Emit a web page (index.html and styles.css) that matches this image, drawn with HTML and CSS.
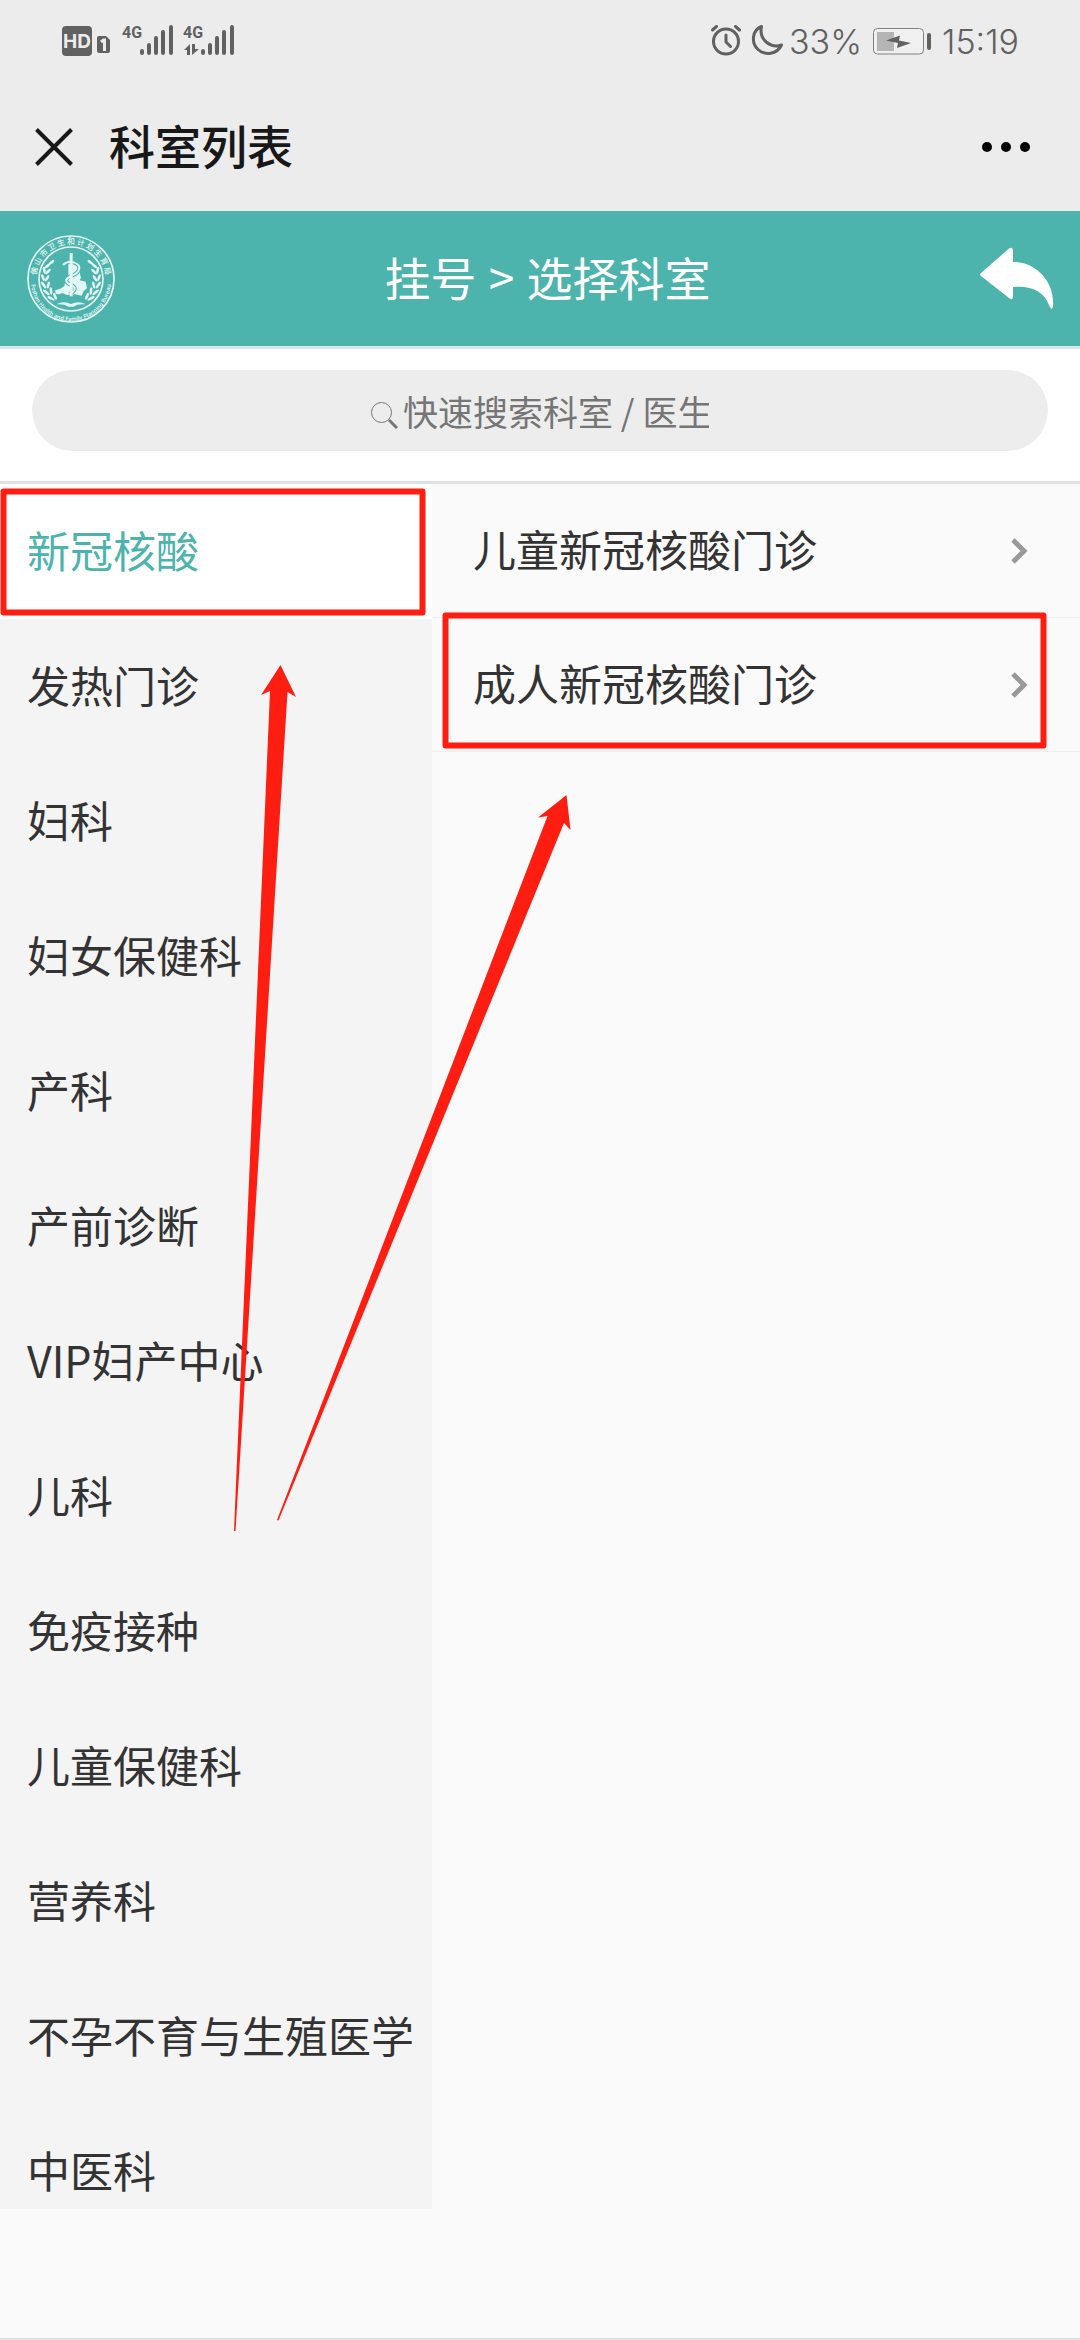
FILE: index.html
```html
<!DOCTYPE html>
<html lang="zh-CN">
<head>
<meta charset="utf-8">
<meta name="viewport" content="width=device-width, initial-scale=1">
<title>科室列表</title>
<link rel="stylesheet" href="styles.css">
</head>
<body>
<div class="app">
  <div class="status-bar">
    <svg class="status-signal" width="174" height="64" viewBox="61 9 174 64" aria-hidden="true">
      <rect class="fill" x="62" y="26" width="30" height="30" rx="4"/>
      <text class="hd-label" x="77" y="48" text-anchor="middle">HD</text>
      <path class="fill" d="M99 36h7l4 4v11q0 2-2 2h-9q-2 0-2-2V38q0-2 2-2z"/>
      <path class="sim-digit" d="M101 42l2.500-2h1v11"/>
      <text class="net-label" x="122" y="38">4G</text>
      <path class="bars" d="M142 51v2M149 45v8M156 38v15M163 32v21M171 27v26"/>
      <text class="net-label" x="183" y="38">4G</text>
      <path class="fill" d="M184 50l6-6v11h-3v-5zM192 44h3v5h4l-7 6z"/>
      <path class="bars" d="M203 51v2M210 45v8M217 38v15M224 32v21M232 27v26"/>
    </svg>
    <div class="status-info">
      <svg width="73" height="32" viewBox="710 25 73 32" aria-hidden="true">
        <g class="stroke">
          <circle cx="726" cy="41.500" r="12.500"/>
          <path d="M726 35v7l4.500 4.500M712.500 30l4-3.500M739.500 30l-4-3.500"/>
          <path class="moon" d="M761.500 26.500C752 30 751 43 758 49.500C765 56 777 54.500 781.500 45C772 48.500 758.500 41 761.500 26.500z"/>
        </g>
      </svg>
      <span class="battery-text">33%</span>
      <svg class="battery" width="60" height="28" viewBox="871 26 60 28" aria-hidden="true">
        <rect class="shell" x="872.500" y="27.500" width="50" height="25.500" rx="4"/>
        <rect class="level" x="876" y="31" width="17" height="19"/>
        <rect class="fill" x="926" y="32" width="4" height="17" rx="2"/>
        <path class="fill" d="M885 39.500l14-5-1 5 12 2.500-14 5 1-5z"/>
      </svg>
      <span>15:19</span>
    </div>
  </div>

  <div class="title-bar">
    <button class="icon-button" type="button" aria-label="关闭">
      <svg width="38" height="38" viewBox="0 0 38 38"><path class="close-mark" d="M1.500 1.500l35 35M36.500 1.500l-35 35"/></svg>
    </button>
    <h1 class="title">科室列表</h1>
    <button class="icon-button" type="button" aria-label="更多">
      <svg width="50" height="12" viewBox="0 0 50 12"><circle cx="6" cy="6" r="5"/><circle cx="25" cy="6" r="5"/><circle cx="44" cy="6" r="5"/></svg>
    </button>
  </div>

  <header class="banner">
    <svg class="logo" viewBox="0 0 264 264" role="img" aria-label="佛山市卫生和计划生育局">
      <defs>
        <path id="arc-top" d="M29 146A104 104 0 1 1 235 146"/>
        <path id="arc-bottom" d="M12 138A120 120 0 0 0 252 138"/>
        <g id="wreath">
          <ellipse cx="62" cy="92" rx="4" ry="11" transform="rotate(50 62 92)"/>
          <ellipse cx="74" cy="82" rx="4" ry="10" transform="rotate(50 74 82)"/>
          <ellipse cx="52" cy="106" rx="4" ry="11" transform="rotate(-10 52 106)"/>
          <ellipse cx="63" cy="110" rx="4" ry="11" transform="rotate(45 63 110)"/>
          <ellipse cx="48" cy="128" rx="4" ry="11" transform="rotate(-20 48 128)"/>
          <ellipse cx="60" cy="130" rx="4" ry="11" transform="rotate(32 60 130)"/>
          <ellipse cx="50" cy="150" rx="4" ry="12" transform="rotate(-35 50 150)"/>
          <ellipse cx="64" cy="150" rx="4" ry="11" transform="rotate(14 64 150)"/>
          <ellipse cx="58" cy="172" rx="4" ry="12" transform="rotate(-50 58 172)"/>
          <ellipse cx="72" cy="168" rx="4" ry="11" transform="rotate(-5 72 168)"/>
          <ellipse cx="72" cy="190" rx="4" ry="12" transform="rotate(-62 72 190)"/>
          <ellipse cx="84" cy="184" rx="4" ry="11" transform="rotate(-22 84 184)"/>
        </g>
      </defs>
      <circle class="ring" cx="132" cy="132" r="129"/>
      <circle class="ring" cx="132" cy="132" r="96"/>
      <text class="logo-cn"><textPath href="#arc-top" startOffset="50%" text-anchor="middle">佛 山 市 卫 生 和 计 划 生 育 局</textPath></text>
      <text class="logo-en"><textPath href="#arc-bottom" startOffset="50%" text-anchor="middle">Foshan Health and Family Planning Bureau</textPath></text>
      <g class="emblem">
        <use href="#wreath"/>
        <use href="#wreath" transform="matrix(-1 0 0 1 264 0)"/>
        <path d="M88 208q22-12 44-1q22-11 44 1q-24-2-36 7h-16q-12-9-36-7z"/>
        <path d="M124 84h22l10 22 6 22-4 8 18 4 4 20-10 8-6 14-20-4-24 2-14-6-10 4-10-2-2-10 14-4 14-8 2-12 10-10z"/>
      </g>
      <path class="snake-gap" d="M108 90q14-14 32-8q24 8 14 26q-6 10-24 16q-24 12-2 24q24 8 10 22l-10 8"/>
      <path class="snake" d="M108 90q14-14 32-8q24 8 14 26q-6 10-24 16q-24 12-2 24q24 8 10 22l-10 8"/>
      <path class="emblem" d="M128 54h9v130h-9z"/>
    </svg>
    <h2 class="banner-title">挂号<span class="separator"> &gt; </span>选择科室</h2>
    <button class="icon-button" type="button" aria-label="返回">
      <svg width="74" height="63" viewBox="0 0 74 63"><path class="back-arrow" d="M1 26L29 1.500Q33-1 33 4V15C57 15 75 36 73 59Q72 65 69 58C64 44 50 38 33 40V49Q33 54 29 51L1 29Q-1 27.500 1 26z"/></svg>
    </button>
  </header>

  <div class="search-area">
    <label class="search-box">
      <svg width="27" height="27" viewBox="0 0 27 27" aria-hidden="true"><circle cx="10.500" cy="10.500" r="10"/><path d="M18 18l8 8"/></svg>
      <input class="search-input" type="text" aria-label="快速搜索科室 / 医生" placeholder="快速搜索科室 / 医生">
    </label>
  </div>

  <main class="columns">
    <nav class="departments" aria-label="科室">
      <a class="department is-active" href="#">新冠核酸</a>
      <a class="department" href="#">发热门诊</a>
      <a class="department" href="#">妇科</a>
      <a class="department" href="#">妇女保健科</a>
      <a class="department" href="#">产科</a>
      <a class="department" href="#">产前诊断</a>
      <a class="department" href="#">VIP妇产中心</a>
      <a class="department" href="#">儿科</a>
      <a class="department" href="#">免疫接种</a>
      <a class="department" href="#">儿童保健科</a>
      <a class="department" href="#">营养科</a>
      <a class="department" href="#">不孕不育与生殖医学</a>
      <a class="department" href="#">中医科</a>
    </nav>
    <div class="clinics">
      <a class="clinic" href="#"><span class="clinic-name">儿童新冠核酸门诊</span>
        <svg class="chevron" width="18" height="28" viewBox="0 0 18 28" aria-hidden="true"><path d="M3 3l11 11L3 25"/></svg>
      </a>
      <a class="clinic" href="#"><span class="clinic-name">成人新冠核酸门诊</span>
        <svg class="chevron" width="18" height="28" viewBox="0 0 18 28" aria-hidden="true"><path d="M3 3l11 11L3 25"/></svg>
      </a>
    </div>
  </main>

  <svg class="marks" viewBox="0 0 1080 2340" aria-hidden="true">
    <rect x="3.500" y="491.500" width="419" height="121"/>
    <rect x="445.500" y="615.500" width="598" height="130"/>
    <path d="M280.500 665L261 695L270 691L234 1531H235.500L287.500 692L296 697z"/>
    <path d="M566.500 795L538 817.500L547.500 816L277 1520L278.500 1520.500L564 823L570.500 830z"/>
  </svg>
</div>
</body>
</html>
```
FILE: styles.css
```css
* {
  box-sizing: border-box;
}

body {
  margin: 0;
  background: #fafafa;
  color: #333;
  font-family: "Noto Sans CJK SC", sans-serif;
  font-size: 43px;
  font-weight: 400;
}

a {
  color: inherit;
  text-decoration: none;
}

svg {
  display: block;
  flex: none;
}

.app {
  position: relative;
  display: flex;
  flex-direction: column;
  height: 100vh;
  border-bottom: 2px solid #e0e0e0;
}

.icon-button {
  flex: none;
  padding: 0;
  border: 0;
  background: none;
}

/* Phone status bar */
.status-bar {
  display: flex;
  flex: none;
  align-items: center;
  justify-content: space-between;
  height: 82px;
  padding: 0 61px;
  background: #ececec;
  color: #616161;
  font-family: Inter, sans-serif;
  font-size: 34px;
  font-weight: 300;
}

.status-info {
  display: flex;
  align-items: center;
  gap: 10px;
}

.battery-text {
  margin-left: -4px;
}

.fill {
  fill: #616161;
}

.hd-label {
  fill: #ececec;
  font-size: 19px;
  font-weight: 700;
}

.net-label {
  fill: #616161;
  font-family: Roboto, sans-serif;
  font-size: 16px;
  font-weight: 700;
}

.sim-digit {
  fill: none;
  stroke: #ececec;
  stroke-width: 3;
}

.bars,
.stroke {
  fill: none;
  stroke: #616161;
  stroke-width: 4;
  stroke-linecap: round;
}

.stroke {
  stroke-width: 3;
}

.moon {
  stroke-linejoin: round;
}

.shell {
  fill: #f0f0f0;
  stroke: #808080;
}

.level {
  fill: #b5b5b5;
}

/* Browser title bar */
.title-bar {
  display: flex;
  flex: none;
  align-items: center;
  height: 129px;
  padding: 0 49px 0 35px;
  background: #ececec;
}

.title {
  flex: 1;
  margin: 0 0 0 36px;
  padding-bottom: 6px;
  color: #181818;
  font-size: 46px;
  font-weight: 500;
  line-height: 60px;
}

.close-mark {
  stroke: #181818;
  stroke-width: 4;
}

/* Hospital banner */
.banner {
  display: flex;
  flex: none;
  align-items: center;
  justify-content: space-between;
  height: 138px;
  padding: 0 26px 0 27px;
  border-bottom: 3px solid #dbe6e8;
  background: #4cb4ac;
  color: #fff;
}

.banner-title {
  margin: 0;
  padding-bottom: 6px;
  font-size: 46px;
  font-weight: 400;
  line-height: 60px;
}

.separator {
  padding: 0 2px;
}

.back-arrow {
  fill: #fff;
}

.logo {
  width: 88px;
  height: 88px;
}

.ring {
  fill: none;
  stroke: #e4f6f4;
  stroke-width: 5;
}

.logo-cn,
.logo-en,
.emblem {
  fill: #e4f6f4;
}

.logo-cn {
  font-size: 23px;
  font-weight: 500;
}

.logo-en {
  font-family: "Noto Sans", sans-serif;
  font-size: 17px;
  font-weight: 600;
}

.snake,
.snake-gap {
  fill: none;
  stroke: #e4f6f4;
  stroke-width: 6;
}

.snake-gap {
  stroke: #4cb4ac;
  stroke-width: 12;
}

/* Search */
.search-area {
  flex: none;
  padding: 21px 32px 30px;
  border-bottom: 3px solid #e0e2e2;
  background: #fff;
}

.search-box {
  display: flex;
  align-items: center;
  justify-content: center;
  gap: 5px;
  height: 81px;
  border-radius: 41px;
  background: #ededed;
}

.search-box svg {
  margin-top: 9px;
  fill: none;
  stroke: #757575;
  stroke-width: 1;
}

.search-box path {
  stroke-width: 3;
}

.search-input {
  width: 306px;
  padding: 0;
  border: 0;
  outline: 0;
  background: none;
  color: #333;
  font: inherit;
  font-size: 35px;
}

.search-input::placeholder {
  color: #757575;
}

/* Department and clinic lists */
.columns {
  display: flex;
  flex: 1;
  min-height: 0;
}

.departments {
  width: 40%;
  margin-bottom: 129px;
  overflow: hidden;
  background: #f4f4f4;
}

.department {
  display: flex;
  align-items: center;
  height: 135px;
  padding: 0 0 6px 27px;
  white-space: nowrap;
}

.department.is-active {
  background: #fff;
  color: #4cb4ac;
}

.clinics {
  flex: 1;
}

.clinic {
  display: flex;
  align-items: center;
  justify-content: space-between;
  height: 134px;
  padding: 0 52px 0 41px;
  border-bottom: 1px solid #eee;
}

.clinic-name {
  padding-bottom: 6px;
}

.chevron {
  fill: none;
  stroke: #999;
  stroke-width: 5;
}

/* Red guide marks drawn over the lists */
.marks {
  position: absolute;
  top: 0;
  left: 0;
  width: 100%;
  fill: #fe1e11;
  pointer-events: none;
}

.marks rect {
  fill: none;
  stroke: #fe1e11;
  stroke-width: 6;
  stroke-linejoin: round;
}
```
